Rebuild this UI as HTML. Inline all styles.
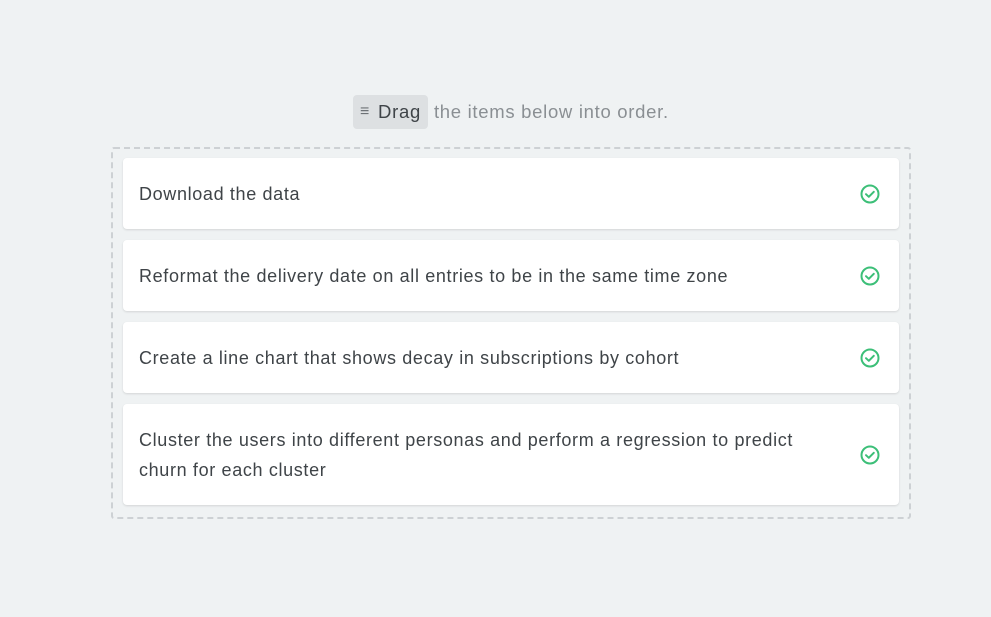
<!DOCTYPE html>
<html><head><style>
html,body{margin:0;padding:0;width:991px;height:617px;background:#eff2f3;font-family:"Liberation Sans",sans-serif;overflow:hidden}
.hdr{position:absolute;top:95px;left:353px;height:34px;display:flex;align-items:center;font-size:18.5px;color:#8a8f93;letter-spacing:0.7px}
.pill{background:#dde0e2;border-radius:4px;height:34px;padding:0 7px;display:flex;align-items:center;color:#3f4448;margin-right:6px}
.pill span{font-size:16px;color:#6d7276;margin-right:8px}
.box{position:absolute;left:111px;top:147px;width:796px;height:368px;border:2px dashed #cdd1d4;border-radius:3px}
.card{position:absolute;left:123px;width:776px;background:#fff;border-radius:4px;box-shadow:0 1px 2px rgba(0,0,0,.12);font-size:18px;letter-spacing:0.65px;color:#3f4448;display:flex;align-items:center;box-sizing:border-box;padding:0 90px 0 16px;line-height:30px}
.card svg{position:absolute;right:19px;top:50%;margin-top:-10px}
</style></head><body>
<div class="hdr"><div class="pill"><span>≡</span>Drag</div>the items below into order.</div>
<div class="box"></div>
<div class="card" style="top:158px;height:71px">Download the data<svg width="20" height="20" viewBox="0 0 20 20"><circle cx="10" cy="10" r="8.5" fill="none" stroke="#3cbf78" stroke-width="2"/><path d="M6 10.2l2.8 2.6 5-5" fill="none" stroke="#3cbf78" stroke-width="2" stroke-linecap="round" stroke-linejoin="round"/></svg></div>
<div class="card" style="top:240px;height:71px">Reformat the delivery date on all entries to be in the same time zone<svg width="20" height="20" viewBox="0 0 20 20"><circle cx="10" cy="10" r="8.5" fill="none" stroke="#3cbf78" stroke-width="2"/><path d="M6 10.2l2.8 2.6 5-5" fill="none" stroke="#3cbf78" stroke-width="2" stroke-linecap="round" stroke-linejoin="round"/></svg></div>
<div class="card" style="top:322px;height:71px">Create a line chart that shows decay in subscriptions by cohort<svg width="20" height="20" viewBox="0 0 20 20"><circle cx="10" cy="10" r="8.5" fill="none" stroke="#3cbf78" stroke-width="2"/><path d="M6 10.2l2.8 2.6 5-5" fill="none" stroke="#3cbf78" stroke-width="2" stroke-linecap="round" stroke-linejoin="round"/></svg></div>
<div class="card" style="top:404px;height:101px">Cluster the users into different personas and perform a regression to predict<br>churn for each cluster<svg width="20" height="20" viewBox="0 0 20 20"><circle cx="10" cy="10" r="8.5" fill="none" stroke="#3cbf78" stroke-width="2"/><path d="M6 10.2l2.8 2.6 5-5" fill="none" stroke="#3cbf78" stroke-width="2" stroke-linecap="round" stroke-linejoin="round"/></svg></div>
</body></html>
